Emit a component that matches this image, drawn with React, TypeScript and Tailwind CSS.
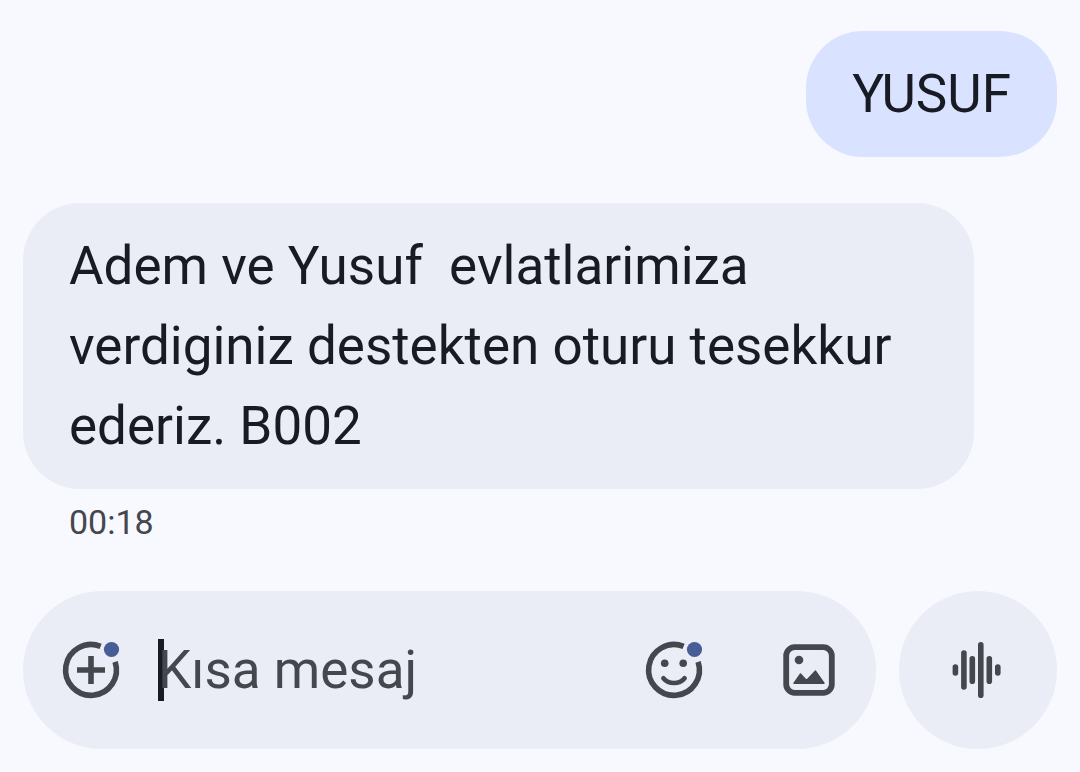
type Message = {
  text: string;
  sent?: boolean;
  time?: string;
};

const MESSAGES: Message[] = [
  { text: 'YUSUF', sent: true },
  {
    text: 'Adem ve Yusuf  evlatlarimiza verdiginiz destekten oturu tesekkur ederiz. B002',
    time: '00:18',
  },
];

function Bubble({ text, sent, time }: Message) {
  return (
    <li className={sent ? 'flex flex-col items-end' : 'flex flex-col items-start'}>
      <p
        className={`max-w-[92%] rounded-[57px] px-[46px] py-[23px] text-[53px] leading-20 whitespace-pre-wrap text-[#181b24] ${
          sent ? 'bg-[#d9e2ff]' : 'bg-[#eaedf6]'
        }`}
      >
        {text}
      </p>
      {time && (
        <time className="mt-[11px] px-[46px] text-[34px] leading-11 text-[#44474e]">{time}</time>
      )}
    </li>
  );
}

/* Ring with a gap at the upper right for the notification dot */
function DotRing() {
  return (
    <>
      <path
        d="M43.6 10.4 A25.4 25.4 0 1 0 58.1 25.9"
        fill="none"
        stroke="currentColor"
        strokeWidth="5.6"
      />
      <circle cx="54.5" cy="13.5" r="7.6" fill="#465d96" />
    </>
  );
}

function AddIcon() {
  return (
    <svg viewBox="0 0 68 68" className="size-17" aria-hidden="true">
      <DotRing />
      <path d="M34 20 V48 M20 34 H48" stroke="currentColor" strokeWidth="5.6" />
    </svg>
  );
}

function EmojiIcon() {
  return (
    <svg viewBox="0 0 68 68" className="size-17" aria-hidden="true">
      <DotRing />
      <circle cx="24.7" cy="27.3" r="3.8" fill="currentColor" />
      <circle cx="43.2" cy="27.3" r="3.8" fill="currentColor" />
      <path
        d="M23.4 42.2 C28.6 48.6 39.4 48.6 44.6 42.2"
        fill="none"
        stroke="currentColor"
        strokeWidth="4.6"
        strokeLinecap="round"
      />
    </svg>
  );
}

function GalleryIcon() {
  return (
    <svg viewBox="0 0 68 68" className="size-17" aria-hidden="true">
      <rect x="11.2" y="11.2" width="45.6" height="45.6" rx="8.5" fill="none" stroke="currentColor" strokeWidth="5.8" />
      <circle cx="24" cy="24" r="4.3" fill="currentColor" />
      <path
        d="M19 47.2 L25.5 37.9 L31.5 44.4 L40.5 35.1 L49 47.2 Z"
        fill="currentColor"
        stroke="currentColor"
        strokeWidth="1.4"
        strokeLinejoin="round"
      />
    </svg>
  );
}

function VoiceIcon() {
  return (
    <svg viewBox="0 0 68 68" className="size-17" aria-hidden="true">
      <path
        d="M11.4 31 V37 M19.9 17 V51 M28.3 22.7 V45.3 M36.8 8.7 V59.3 M45.3 22.7 V45.3 M53.8 31 V37"
        stroke="currentColor"
        strokeWidth="5.6"
        strokeLinecap="round"
      />
    </svg>
  );
}

export default function App() {
  return (
    <main className="flex min-h-screen flex-col justify-between bg-[#f8f9ff] p-[23px] pt-[31px] font-[Roboto,sans-serif]">
      <ul className="flex flex-col gap-[46px]">
        {MESSAGES.map((message) => (
          <Bubble key={message.text} {...message} />
        ))}
      </ul>

      {/* Composer */}
      <form className="flex gap-[23px] text-[#44474e]" onSubmit={(e) => e.preventDefault()}>
        <div className="flex h-[158px] min-w-0 flex-1 items-center rounded-full bg-[#eaedf6] pr-[33px] pl-[34px]">
          <button type="button" aria-label="Ekle" className="shrink-0">
            <AddIcon />
          </button>
          <div className="relative ml-[33px] min-w-0 flex-1">
            {/* Text cursor, drawn under the placeholder */}
            <span className="absolute inset-y-0 left-0 w-[6px] bg-[#181b24]" />
            <input
              type="text"
              aria-label="Kısa mesaj"
              placeholder="Kısa mesaj"
              className="relative block h-[62px] w-full bg-transparent text-[53px] leading-[62px] caret-transparent outline-none placeholder:text-[#44474e]"
            />
          </div>
          <button type="button" aria-label="Emoji" className="shrink-0">
            <EmojiIcon />
          </button>
          <button type="button" aria-label="Galeri" className="ml-[67px] shrink-0">
            <GalleryIcon />
          </button>
        </div>
        <button
          type="button"
          aria-label="Sesli mesaj"
          className="flex size-[158px] shrink-0 items-center justify-center rounded-full bg-[#eaedf6]"
        >
          <VoiceIcon />
        </button>
      </form>
    </main>
  );
}
